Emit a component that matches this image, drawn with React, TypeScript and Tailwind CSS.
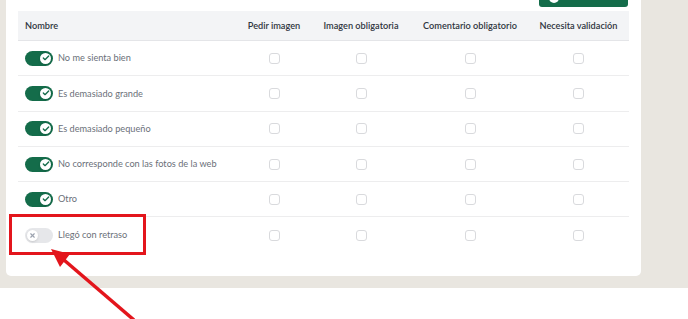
import { Check, X } from "lucide-react"

const rows = [
  { name: "No me sienta bien", on: true },
  { name: "Es demasiado grande", on: true },
  { name: "Es demasiado pequeño", on: true },
  { name: "No corresponde con las fotos de la web", on: true },
  { name: "Otro", on: true },
  { name: "Llegó con retraso", on: false },
]

const columns = ["Pedir imagen", "Imagen obligatoria", "Comentario obligatorio", "Necesita validación"]

const gridCols = "grid grid-cols-[219px_74px_100px_118px_99px]"

function Toggle({ on }: { on: boolean }) {
  return (
    <div
      className={
        on
          ? "flex h-[15px] w-[28px] shrink-0 items-center justify-end rounded-full bg-[#146c4a] px-[2px]"
          : "flex h-[15px] w-[28px] shrink-0 items-center justify-start rounded-full bg-[#e6e7ea] px-[2px]"
      }
    >
      <div className="flex h-[11px] w-[11px] items-center justify-center rounded-full bg-white shadow-sm">
        {on ? (
          <Check className="h-[8px] w-[8px] text-[#146c4a]" strokeWidth={4} />
        ) : (
          <X className="h-[7px] w-[7px] text-[#9ca3af]" strokeWidth={4} />
        )}
      </div>
    </div>
  )
}

function Checkbox() {
  return (
    <div className="flex items-center justify-center">
      <div className="h-[11px] w-[11px] rounded-[3px] border border-[#d9dadd] bg-white" />
    </div>
  )
}

export default function App() {
  return (
    <div className="relative min-h-[319px] w-[688px] bg-white font-['Lato',sans-serif]">
      <div className="h-[288px] bg-[#e9e6e0] pl-[6px] pr-[47px]">
        <div className="h-[276px] rounded-b-[5px] bg-white px-3">
          {/* Toolbar */}
          <div className="flex h-[11px] justify-end pr-px">
            <div className="relative h-[7px] w-[89px] overflow-hidden rounded-b-[3px] bg-[#146c4a]">
              <div className="absolute left-[10px] top-[-7px] h-[10px] w-[10px] rounded-full bg-white" />
            </div>
          </div>

          {/* Header */}
          <div className={`${gridCols} h-[30px] items-center border-b border-[#e4e5e8] bg-[#f3f4f6] text-[9.2px] font-semibold text-[#2f3440]`}>
            <div className="pl-[7px]">Nombre</div>
            {columns.map((c) => (
              <div key={c} className="text-center">
                {c}
              </div>
            ))}
          </div>

          {/* Rows */}
          {rows.map((row, i) => (
            <div
              key={row.name}
              className={`${gridCols} h-[35.3px] items-center ${i < rows.length - 1 ? "border-b border-[#ededee]" : ""}`}
            >
              <div className="flex items-center gap-[5px] pl-[7px] text-[9.2px] text-[#6b7079]">
                <Toggle on={row.on} />
                <span>{row.name}</span>
              </div>
              <Checkbox />
              <Checkbox />
              <Checkbox />
              <Checkbox />
            </div>
          ))}
        </div>
      </div>

      {/* Annotation */}
      <div className="pointer-events-none absolute left-[9px] top-[214px] h-[41px] w-[137px] border-[3px] border-[#e3151c]" />
      <svg className="pointer-events-none absolute left-0 top-0" width="688" height="319" viewBox="0 0 688 319">
        <line x1="134" y1="320" x2="64" y2="260" stroke="#e3151c" strokeWidth="3.5" />
        <polygon points="51,249 70,254 60,267" fill="#e3151c" />
      </svg>
    </div>
  )
}
